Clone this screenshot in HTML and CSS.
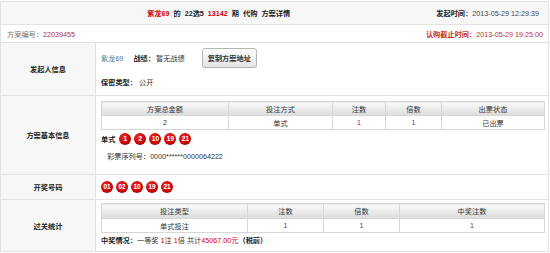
FILE: index.html
```html
<!DOCTYPE html>
<html>
<head>
  <meta charset="UTF-8">
  <title>方案详情</title>
  <link rel="stylesheet" href="styles.css">
</head>
<body>
  <div class="plan">
    <div class="plan-head">
      <div class="plan-title"><span class="red">紫龙69</span> 的 22选5 <span class="red">13142</span> 期 代购 方案详情</div>
      <div class="plan-time"><b>发起时间：</b>2013-05-29 12:29:39</div>
    </div>
    <div class="plan-sub">
      <div class="plan-no">方案编号：<span class="num">22039455</span></div>
      <div class="deadline"><b>认购截止时间：</b>2013-05-29 19:25:00</div>
    </div>

    <div class="row row-owner">
      <div class="label">发起人信息</div>
      <div class="cell">
        <div class="owner-line">
          <a class="user" href="#">紫龙69</a>
          <span class="record"><b>战绩：</b>暂无战绩</span>
          <button class="btn-copy">复制方案地址</button>
        </div>
        <div class="owner-line secret"><b>保密类型：</b>公开</div>
      </div>
    </div>

    <div class="row row-basic">
      <div class="label">方案基本信息</div>
      <div class="cell">
        <table class="grid grid-basic">
          <colgroup><col class="c1"><col class="c2"><col class="c3"><col class="c4"><col></colgroup>
          <tr><th>方案总金额</th><th>投注方式</th><th>注数</th><th>倍数</th><th>出票状态</th></tr>
          <tr><td>2</td><td>单式</td><td class="val">1</td><td class="val">1</td><td>已出票</td></tr>
        </table>
        <div class="ball-line">
          <b class="bet-type">单式</b>
          <span class="ball">1</span><span class="ball">2</span><span class="ball">10</span><span class="ball">19</span><span class="ball">21</span>
        </div>
        <div class="serial">彩票序列号：0000******0000064222</div>
      </div>
    </div>

    <div class="row row-draw">
      <div class="label">开奖号码</div>
      <div class="cell ball-line">
        <span class="ball">01</span><span class="ball">02</span><span class="ball">10</span><span class="ball">19</span><span class="ball">21</span>
      </div>
    </div>

    <div class="row row-pass">
      <div class="label">过关统计</div>
      <div class="cell">
        <table class="grid grid-pass">
          <colgroup><col class="c1"><col class="c2"><col class="c3"><col></colgroup>
          <tr><th>投注类型</th><th>注数</th><th>倍数</th><th>中奖注数</th></tr>
          <tr><td>单式投注</td><td class="val">1</td><td class="val">1</td><td class="val">1</td></tr>
        </table>
        <div class="prize"><b>中奖情况：</b>一等奖 <span class="red">1</span>注 <span class="red">1</span>倍 共计<span class="red">45067.00元</span><b>（税前）</b></div>
      </div>
    </div>
  </div>
</body>
</html>
```

FILE: styles.css
```css
body { margin: 0; font-family: "Liberation Sans", "Noto Sans CJK SC", sans-serif; font-size: 7.2px; color: #333; background: #fff; }
b { color: #222; }
.red { color: #c00; }

.plan { width: 547px; margin-top: 1px; border: 1px solid #e2e2e2; }
.plan-head { display: flex; align-items: center; height: 22px; background: #f7f7f7; border-bottom: 1px solid #e2e2e2; }
.plan-title { flex: 1; text-align: center; font-weight: bold; color: #222; word-spacing: 2px; }
.plan-time { padding-right: 9px; color: #444; }
.plan-sub { display: flex; justify-content: space-between; align-items: center; height: 17px; padding: 0 5px 0 6px; border-bottom: 1px solid #e2e2e2; }
.plan-no { color: #777; }
.plan-no .num { color: #b03030; }
.deadline, .deadline b { color: #c0302a; }

.row { display: flex; border-bottom: 1px solid #e2e2e2; }
.row:last-child { border-bottom: 0; }
.label { flex: none; width: 95px; box-sizing: border-box; display: flex; align-items: center; justify-content: center; background: #f7f7f7; border-right: 1px solid #e2e2e2; font-weight: bold; color: #222; }
.cell { flex: 1; padding: 0 3px 0 5px; }

.row-owner { height: 52px; }
.row-owner .cell { padding-top: 5px; }
.owner-line { display: flex; align-items: center; height: 20px; }
.user { color: #4d7d8c; text-decoration: none; }
.record { margin-left: 10px; }
.record b { margin-right: 1px; }
.btn-copy { margin-left: 17px; height: 20px; padding: 0 5px; font: bold 7.2px "Liberation Sans", "Noto Sans CJK SC", sans-serif; color: #333; background: linear-gradient(#fdfdfd, #e4e4e4); border: 1px solid #b5b5b5; border-radius: 3px; }
.secret { height: 14px; margin-top: 7px; }
.secret b { margin-right: 2px; }

.row-basic { height: 78px; }
.row-basic .cell { padding-top: 5px; }
.grid { width: 100%; border-collapse: collapse; table-layout: fixed; }
.grid th, .grid td { border: 1px solid #d6d6d6; text-align: center; padding: 0; }
.grid th { height: 13px; font-weight: normal; color: #333; background: linear-gradient(#fafafa, #dcdcdc); }
.grid td { height: 13px; }
.grid .val { color: #8a2a6a; }
.grid-basic .c1 { width: 127px; }
.grid-basic .c2 { width: 104px; }
.grid-basic .c3 { width: 53px; }
.grid-basic .c4 { width: 56px; }
.grid-pass .c1 { width: 146px; }
.grid-pass .c2 { width: 76px; }
.grid-pass .c3 { width: 76px; }

.ball-line { display: flex; align-items: center; gap: 3px; }
.row-basic .ball-line { margin-top: 3px; }
.bet-type { margin-right: 1px; }
.ball { width: 12px; height: 12px; border-radius: 50%; background: radial-gradient(circle at 40% 35%, #e83030, #c80000 60%, #9a0000); color: #fff; font-weight: bold; font-size: 6.5px; line-height: 12px; text-align: center; }
.serial { margin-top: 7px; padding-left: 6px; line-height: 10px; }

.row-draw { height: 24px; }

.row-pass { height: 51px; }
.row-pass .cell { padding-top: 3px; }
.grid-pass th { height: 14px; }
.prize { margin-top: 3px; line-height: 10px; }
```
